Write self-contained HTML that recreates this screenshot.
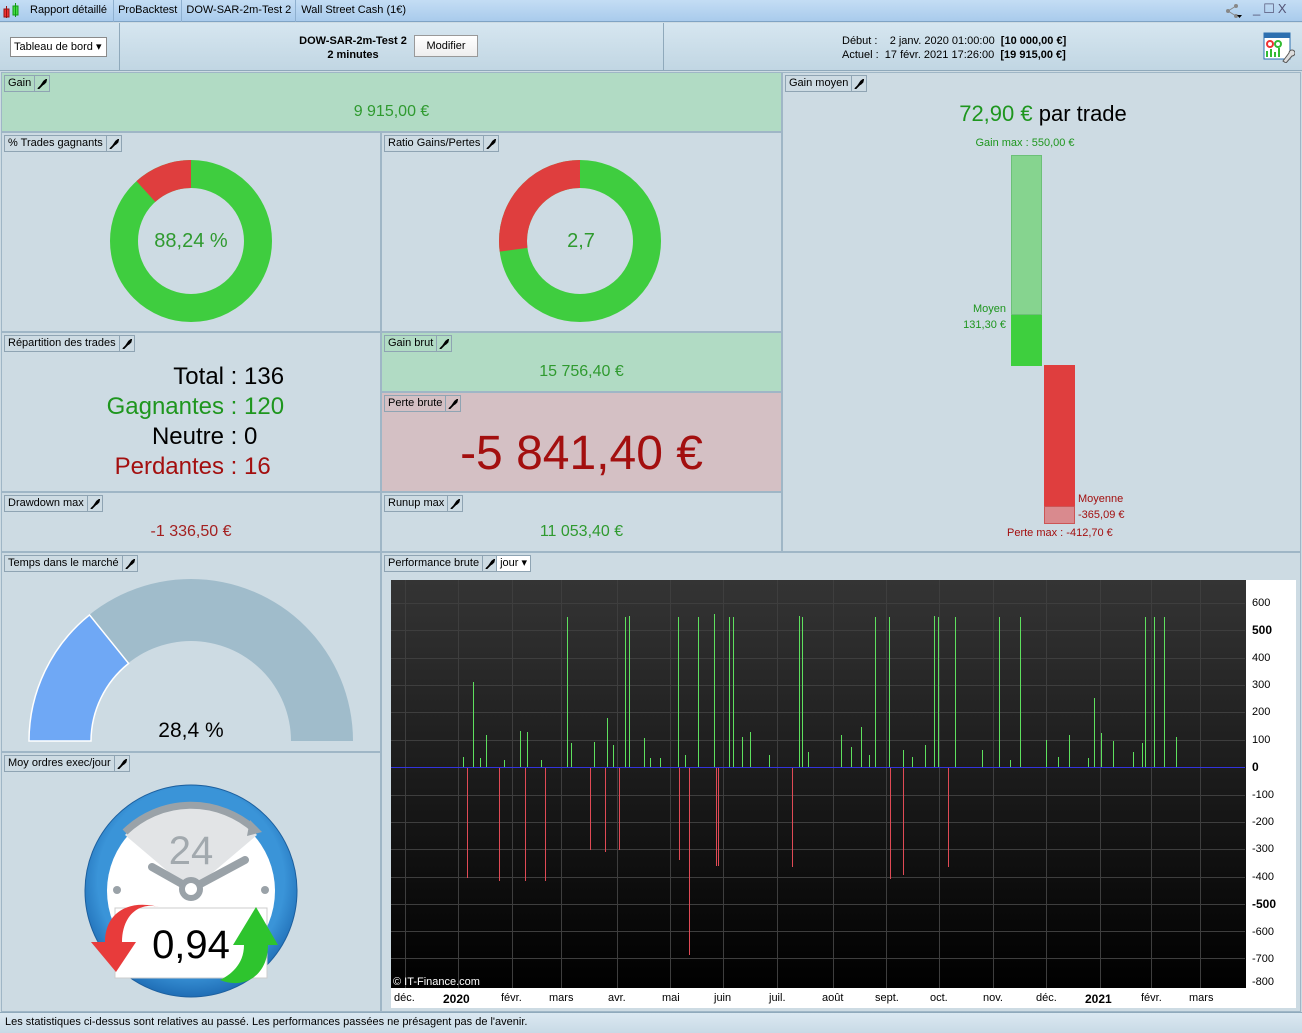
<!DOCTYPE html>
<html><head><meta charset="utf-8"><style>
*{margin:0;padding:0;box-sizing:border-box}
body{width:1302px;height:1033px;position:relative;overflow:hidden;background:#cddbe3;font-family:"Liberation Sans",sans-serif;font-size:11px;color:#000}
.a{position:absolute}
.p{position:absolute;background:#cddbe3;border:1px solid #9fb6c6}
.g{background:#b1dbc4}
.r{background:#d4c0c4}
.lb{position:absolute;left:2px;top:2px;height:17px;border:1px solid #8fa4b3;display:flex;font-size:11px;line-height:15px;background:transparent}
.lb span{padding:0 3px;border-right:1px solid #8fa4b3}
.lb i{width:14px;display:flex;align-items:center;justify-content:center}
.c{position:absolute;left:0;right:0;text-align:center}
</style></head><body>
<svg width="0" height="0" style="position:absolute"><defs><symbol id="w" viewBox="0 0 10 10"><path d="M1.5 9.5L5.5 5.5M5 5.5L7 2.5L9 1L8.5 3L6.5 5Z" stroke="#000" stroke-width="1.8" fill="#000" stroke-linecap="round"/></symbol></defs></svg>
<!-- title bar -->
<div class="a" style="left:0;top:0;width:1302px;height:22px;background:linear-gradient(#c4ddf4,#a9cbec);border-bottom:1px solid #7fa3c4"></div>
<svg class="a" style="left:3px;top:3px" width="18" height="16"><rect x="1" y="6" width="5" height="8" fill="#e33" stroke="#911"/><line x1="3.5" y1="3" x2="3.5" y2="15" stroke="#911"/><rect x="10" y="3" width="5" height="9" fill="#4d4" stroke="#191"/><line x1="12.5" y1="0" x2="12.5" y2="14" stroke="#191"/></svg>
<div class="a" style="left:24px;top:0;height:22px;line-height:20px;display:flex;font-size:11px">
<span style="padding:0 6px;border-right:1px solid #8fb0cf">Rapport détaillé</span><span style="padding:0 4px;border-right:1px solid #8fb0cf">ProBacktest</span><span style="padding:0 4px;border-right:1px solid #8fb0cf">DOW-SAR-2m-Test 2</span><span style="padding:0 5px">Wall Street Cash (1€)</span></div>
<svg class="a" style="left:1224px;top:3px" width="20" height="16"><circle cx="4" cy="8" r="2" fill="#888"/><circle cx="12" cy="3" r="2" fill="#888"/><circle cx="12" cy="13" r="2" fill="#888"/><path d="M4 8L12 3M4 8L12 13" stroke="#888"/><path d="M13 12h5l-2.5 3z" fill="#000"/></svg>
<div class="a" style="left:1253px;top:1px;font-size:13px;color:#557;letter-spacing:3px">_☐X</div>
<!-- toolbar -->
<div class="a" style="left:0;top:23px;width:1302px;height:48px;background:linear-gradient(#d6e6f0,#c1d6e3);border-bottom:1px solid #8fa9bb"></div>
<div class="a" style="left:119px;top:23px;width:1px;height:48px;background:#8fa9bb"></div>
<div class="a" style="left:663px;top:23px;width:1px;height:48px;background:#8fa9bb"></div>
<div class="a" style="left:10px;top:37px;width:97px;height:20px;border:1px solid #8a8a8a;background:#fff;font-size:11px;line-height:18px;padding-left:3px">Tableau de bord ▾</div>
<div class="a" style="left:290px;top:34px;width:126px;text-align:center;font-weight:bold;font-size:11px;line-height:14px">DOW-SAR-2m-Test 2<br>2 minutes</div>
<div class="a" style="left:414px;top:35px;width:64px;height:22px;border:1px solid #999;background:linear-gradient(#fff,#eee);text-align:center;line-height:20px;font-size:11px">Modifier</div>
<div class="a" style="left:842px;top:34px;font-size:11px;line-height:14px;white-space:pre">Début :    2 janv. 2020 01:00:00  <b>[10 000,00 €]</b>
Actuel :  17 févr. 2021 17:26:00  <b>[19 915,00 €]</b></div>
<svg class="a" style="left:1263px;top:31px" width="32" height="32"><rect x="1" y="2" width="26" height="26" fill="#fff" stroke="#2c6fb0"/><rect x="1" y="2" width="26" height="5" fill="#2c6fb0"/><circle cx="7" cy="13" r="3" fill="none" stroke="#e33" stroke-width="2"/><circle cx="15" cy="13" r="3" fill="none" stroke="#3b3" stroke-width="2"/><path d="M4 26V20M8 26V18M12 26V21M16 26V17" stroke="#3b3" stroke-width="2"/><path d="M20 30l6-8a3 3 0 1 1 3 3l-6 7z" fill="#ddd" stroke="#555"/></svg>

<!-- Gain -->
<div class="p g" style="left:1px;top:72px;width:781px;height:60px"><div class="lb"><span>Gain</span><i><svg width="10" height="10"><use href="#w"/></svg></i></div><div class="c" style="top:30px;font-size:16px;color:#2f9a2f">9 915,00 €</div></div>
<!-- %trades -->
<div class="p" style="left:1px;top:132px;width:380px;height:200px"><div class="lb"><span>% Trades gagnants</span><i><svg width="10" height="10"><use href="#w"/></svg></i></div></div>
<svg class="a" style="left:100px;top:150px" width="182" height="182"><circle cx="91" cy="91" r="67" fill="none" stroke="#3fcd3f" stroke-width="28"/><circle cx="91" cy="91" r="67" fill="none" stroke="#df3e3e" stroke-width="28" stroke-dasharray="49.5 372" transform="rotate(-90 91 91) scale(1 -1) translate(0 -182)"/></svg>
<div class="a" style="left:130px;top:230px;width:122px;text-align:center;font-size:20px;color:#2f9a2f">88,24 %</div>
<!-- ratio -->
<div class="p" style="left:381px;top:132px;width:401px;height:200px"><div class="lb"><span>Ratio Gains/Pertes</span><i><svg width="10" height="10"><use href="#w"/></svg></i></div></div>
<svg class="a" style="left:489px;top:150px" width="182" height="182"><circle cx="91" cy="91" r="67" fill="none" stroke="#3fcd3f" stroke-width="28"/><circle cx="91" cy="91" r="67" fill="none" stroke="#df3e3e" stroke-width="28" stroke-dasharray="114 372" transform="rotate(-90 91 91) scale(1 -1) translate(0 -182)"/></svg>
<div class="a" style="left:520px;top:230px;width:122px;text-align:center;font-size:20px;color:#2f9a2f">2,7</div>
<!-- Répartition -->
<div class="p" style="left:1px;top:332px;width:380px;height:160px"><div class="lb"><span>Répartition des trades</span><i><svg width="10" height="10"><use href="#w"/></svg></i></div></div>
<div class="a" style="left:0;top:362px;font-size:24px;line-height:30px">
<div><span style="display:inline-block;width:224px;text-align:right">Total</span> : 136</div>
<div style="color:#1e961e"><span style="display:inline-block;width:224px;text-align:right">Gagnantes</span> : 120</div>
<div><span style="display:inline-block;width:224px;text-align:right">Neutre</span> : 0</div>
<div style="color:#a30f0f"><span style="display:inline-block;width:224px;text-align:right">Perdantes</span> : 16</div></div>
<!-- Gain brut -->
<div class="p g" style="left:381px;top:332px;width:401px;height:60px"><div class="lb"><span>Gain brut</span><i><svg width="10" height="10"><use href="#w"/></svg></i></div><div class="c" style="top:30px;font-size:16px;color:#2f9a2f">15 756,40 €</div></div>
<div class="p r" style="left:381px;top:392px;width:401px;height:100px"><div class="lb"><span>Perte brute</span><i><svg width="10" height="10"><use href="#w"/></svg></i></div><div class="c" style="top:33px;font-size:48px;color:#a30f0f">-5 841,40 €</div></div>
<!-- drawdown -->
<div class="p" style="left:1px;top:492px;width:380px;height:60px"><div class="lb"><span>Drawdown max</span><i><svg width="10" height="10"><use href="#w"/></svg></i></div><div class="c" style="top:30px;font-size:16px;color:#a32020">-1 336,50 €</div></div>
<div class="p" style="left:381px;top:492px;width:401px;height:60px"><div class="lb"><span>Runup max</span><i><svg width="10" height="10"><use href="#w"/></svg></i></div><div class="c" style="top:30px;font-size:16px;color:#2f9a2f">11 053,40 €</div></div>
<!-- Gain moyen -->
<div class="p" style="left:782px;top:72px;width:519px;height:480px"><div class="lb"><span>Gain moyen</span><i><svg width="10" height="10"><use href="#w"/></svg></i></div></div>
<div class="a" style="left:900px;top:101px;width:286px;text-align:center;font-size:22px"><span style="color:#1e961e">72,90 €</span> par trade</div>
<div class="a" style="left:960px;top:137px;width:130px;text-align:center;font-size:11px;color:#1e961e">Gain max : 550,00 €</div>
<div class="a" style="left:1011px;top:155px;width:31px;height:160px;background:#86d48f;border:1px solid #6cc078"></div>
<div class="a" style="left:1011px;top:315px;width:31px;height:51px;background:#3ecf3e"></div>
<div class="a" style="left:940px;top:301px;width:66px;text-align:right;font-size:11px;line-height:16px;color:#1e961e">Moyen<br>131,30 €</div>
<div class="a" style="left:1044px;top:365px;width:31px;height:142px;background:#df3e3e"></div>
<div class="a" style="left:1044px;top:506px;width:31px;height:18px;background:#d98a8e;border:1px solid #c55"></div>
<div class="a" style="left:1078px;top:491px;font-size:11px;line-height:16px;color:#a30f0f">Moyenne<br>-365,09 €</div>
<div class="a" style="left:1007px;top:527px;font-size:11px;color:#a30f0f">Perte max : -412,70 €</div>
<!-- Temps -->
<div class="p" style="left:1px;top:552px;width:380px;height:200px"><div class="lb"><span>Temps dans le marché</span><i><svg width="10" height="10"><use href="#w"/></svg></i></div></div>
<svg class="a" style="left:0;top:560px" width="381" height="190"><path d="M29 181A162 162 0 0 1 353 181L291 181A100 100 0 0 0 91 181Z" fill="#a0bccb"/><path d="M29 181A162 162 0 0 1 89.5 54.9L128.6 103.4A100 100 0 0 0 91 181Z" fill="#6fa8f5" stroke="#fff" stroke-width="1.5"/></svg>
<div class="a" style="left:130px;top:719px;width:122px;text-align:center;font-size:21px">28,4 %</div>
<!-- Moy ordres -->
<div class="p" style="left:1px;top:752px;width:380px;height:260px"><div class="lb"><span>Moy ordres exec/jour</span><i><svg width="10" height="10"><use href="#w"/></svg></i></div></div>
<svg class="a" style="left:80px;top:780px" width="224" height="220">
<defs><radialGradient id="bl" cx="50%" cy="45%" r="55%"><stop offset="0.8" stop-color="#3a94d8"/><stop offset="1" stop-color="#1f6db5"/></radialGradient></defs>
<circle cx="111" cy="111" r="106" fill="url(#bl)" stroke="#1c5f9e"/>
<circle cx="111" cy="111" r="84" fill="#fff"/>
<path d="M111 111L45 55A88 88 0 0 1 177 55Z" fill="#e2e4e6"/>
<path d="M45 52A95 95 0 0 1 175 50" fill="none" stroke="#9aa2a8" stroke-width="7"/>
<path d="M170 40l12 12-15 4z" fill="#9aa2a8"/>
<text x="111" y="84" text-anchor="middle" font-family="Liberation Sans" font-size="40" fill="#a2a9ae">24</text>
<path d="M72 87L111 109L165 80" fill="none" stroke="#9aa2a8" stroke-width="8" stroke-linecap="round"/>
<circle cx="111" cy="109" r="9" fill="#fff" stroke="#9aa2a8" stroke-width="6"/>
<circle cx="37" cy="110" r="4" fill="#9aa2a8"/><circle cx="185" cy="110" r="4" fill="#9aa2a8"/>
<rect x="35" y="128" width="152" height="70" fill="#fff" stroke="#ccc"/>
<path d="M82 128C60 120 42 135 42 162L56 162L36 192L11 162L25 162C25 132 50 118 82 128Z" fill="#e83b3b"/>
<path d="M140 200C165 210 188 195 188 165L198 165L176 127L153 165L164 165C164 185 150 195 140 200Z" fill="#2ec42e"/>
<text x="111" y="178" text-anchor="middle" font-family="Liberation Sans" font-size="40">0,94</text>
</svg>
<!-- Performance -->
<div class="p" style="left:381px;top:552px;width:920px;height:460px"><div class="lb" style="background:#cddbe3"><span>Performance brute</span><i style="border-right:1px solid #8fa4b3"><svg width="10" height="10"><use href="#w"/></svg></i><span style="border:none;background:#fff">jour ▾</span></div></div>
<div class="a" style="left:391px;top:580px;width:905px;height:428px;background:#fff"></div>
<svg class="a" style="left:391px;top:580px" width="855" height="408" viewBox="391 580 855 408" shape-rendering="crispEdges">
<defs><linearGradient id="cg" x1="0" y1="0" x2="0" y2="1"><stop offset="0" stop-color="#343434"/><stop offset="1" stop-color="#000"/></linearGradient></defs>
<rect x="391" y="580" width="855" height="408" fill="url(#cg)"/>
<g stroke="#3e3e3e" stroke-width="1">
<path d="M391 603.5H1245M391 630.5H1245M391 658.5H1245M391 685.5H1245M391 712.5H1245M391 740.5H1245M391 795.5H1245M391 822.5H1245M391 849.5H1245M391 877.5H1245M391 904.5H1245M391 931.5H1245M391 958.5H1245"/>
<path d="M405.5 580V988M458.5 580V988M512.5 580V988M561.5 580V988M617.5 580V988M670.5 580V988M723.5 580V988M777.5 580V988M833.5 580V988M886.5 580V988M939.5 580V988M993.5 580V988M1046.5 580V988M1100.5 580V988M1151.5 580V988M1200.5 580V988"/>
</g>
<g fill="#5ee05e">
<rect x="567" y="617" width="1" height="150"/><rect x="625" y="617" width="1" height="150"/><rect x="629" y="616" width="1" height="151"/><rect x="678" y="617" width="1" height="150"/><rect x="698" y="617" width="1" height="150"/><rect x="714" y="614" width="1" height="153"/><rect x="729" y="617" width="1" height="150"/><rect x="733" y="617" width="1" height="150"/><rect x="799" y="616" width="1" height="151"/><rect x="802" y="617" width="1" height="150"/><rect x="875" y="617" width="1" height="150"/><rect x="889" y="617" width="1" height="150"/><rect x="934" y="616" width="1" height="151"/><rect x="938" y="617" width="1" height="150"/><rect x="955" y="617" width="1" height="150"/><rect x="999" y="617" width="1" height="150"/><rect x="1020" y="617" width="1" height="150"/><rect x="1145" y="617" width="1" height="150"/><rect x="1154" y="617" width="1" height="150"/><rect x="1164" y="617" width="1" height="150"/>
<rect x="473" y="682" width="1" height="85"/><rect x="486" y="735" width="1" height="32"/><rect x="463" y="757" width="1" height="10"/><rect x="480" y="758" width="1" height="9"/><rect x="520" y="731" width="1" height="36"/><rect x="527" y="732" width="1" height="35"/><rect x="571" y="743" width="1" height="24"/><rect x="594" y="742" width="1" height="25"/><rect x="607" y="718" width="1" height="49"/><rect x="613" y="745" width="1" height="22"/><rect x="644" y="738" width="1" height="29"/><rect x="660" y="758" width="1" height="9"/><rect x="685" y="755" width="1" height="12"/><rect x="742" y="737" width="1" height="30"/><rect x="750" y="732" width="1" height="35"/><rect x="769" y="755" width="1" height="12"/><rect x="841" y="735" width="1" height="32"/><rect x="851" y="747" width="1" height="20"/><rect x="861" y="727" width="1" height="40"/><rect x="869" y="755" width="1" height="12"/><rect x="925" y="745" width="1" height="22"/><rect x="912" y="757" width="1" height="10"/><rect x="982" y="750" width="1" height="17"/><rect x="1046" y="740" width="1" height="27"/><rect x="1058" y="757" width="1" height="10"/><rect x="1069" y="735" width="1" height="32"/><rect x="1094" y="698" width="1" height="69"/><rect x="1101" y="733" width="1" height="34"/><rect x="1113" y="741" width="1" height="26"/><rect x="1133" y="752" width="1" height="15"/><rect x="1142" y="743" width="1" height="24"/><rect x="1176" y="737" width="1" height="30"/><rect x="1088" y="758" width="1" height="9"/><rect x="1010" y="760" width="1" height="7"/><rect x="903" y="750" width="1" height="17"/><rect x="808" y="752" width="1" height="15"/><rect x="650" y="758" width="1" height="9"/><rect x="541" y="760" width="1" height="7"/><rect x="504" y="760" width="1" height="7"/>
</g>
<g fill="#e04a55">
<rect x="467" y="767" width="1" height="111"/><rect x="499" y="767" width="1" height="114"/><rect x="525" y="767" width="1" height="114"/><rect x="545" y="767" width="1" height="114"/><rect x="590" y="767" width="1" height="83"/><rect x="605" y="767" width="1" height="85"/><rect x="619" y="767" width="1" height="83"/><rect x="689" y="767" width="1" height="188"/><rect x="716" y="767" width="1" height="99"/><rect x="718" y="767" width="1" height="99"/><rect x="792" y="767" width="1" height="100"/><rect x="890" y="767" width="1" height="112"/><rect x="903" y="767" width="1" height="108"/><rect x="948" y="767" width="1" height="100"/><rect x="679" y="767" width="1" height="93"/>
</g>
<rect x="391" y="767" width="854" height="1" fill="#3333dd"/>
<text x="393" y="985" font-family="Liberation Sans" font-size="11" fill="#fff">© IT-Finance.com</text>
</svg>
<div class="a" style="left:1245px;top:580px;width:52px;height:410px;font-size:11px">
<div class="a" style="left:7px;top:17px">600</div><div class="a" style="left:7px;top:43px;font-weight:bold;font-size:12px">500</div><div class="a" style="left:7px;top:72px">400</div><div class="a" style="left:7px;top:99px">300</div><div class="a" style="left:7px;top:126px">200</div><div class="a" style="left:7px;top:154px">100</div><div class="a" style="left:7px;top:180px;font-weight:bold;font-size:12px">0</div><div class="a" style="left:7px;top:209px">-100</div><div class="a" style="left:7px;top:236px">-200</div><div class="a" style="left:7px;top:263px">-300</div><div class="a" style="left:7px;top:291px">-400</div><div class="a" style="left:7px;top:317px;font-weight:bold;font-size:12px">-500</div><div class="a" style="left:7px;top:346px">-600</div><div class="a" style="left:7px;top:373px">-700</div><div class="a" style="left:7px;top:396px">-800</div>
</div>
<div class="a" style="left:391px;top:992px;width:855px;height:16px;font-size:11px">
<span class="a" style="left:3px">déc.</span><span class="a" style="left:52px;font-weight:bold;font-size:12px">2020</span><span class="a" style="left:110px">févr.</span><span class="a" style="left:158px">mars</span><span class="a" style="left:217px">avr.</span><span class="a" style="left:271px">mai</span><span class="a" style="left:323px">juin</span><span class="a" style="left:378px">juil.</span><span class="a" style="left:431px">août</span><span class="a" style="left:484px">sept.</span><span class="a" style="left:539px">oct.</span><span class="a" style="left:592px">nov.</span><span class="a" style="left:645px">déc.</span><span class="a" style="left:694px;font-weight:bold;font-size:12px">2021</span><span class="a" style="left:750px">févr.</span><span class="a" style="left:798px">mars</span>
</div>
<!-- footer -->
<div class="a" style="left:0;top:1012px;width:1302px;height:21px;background:linear-gradient(#dbe8f1,#c8dae6);border-top:1px solid #8fa9bb;font-size:11px;line-height:19px;padding-left:5px">Les statistiques ci-dessus sont relatives au passé. Les performances passées ne présagent pas de l'avenir.</div>
</body></html>
